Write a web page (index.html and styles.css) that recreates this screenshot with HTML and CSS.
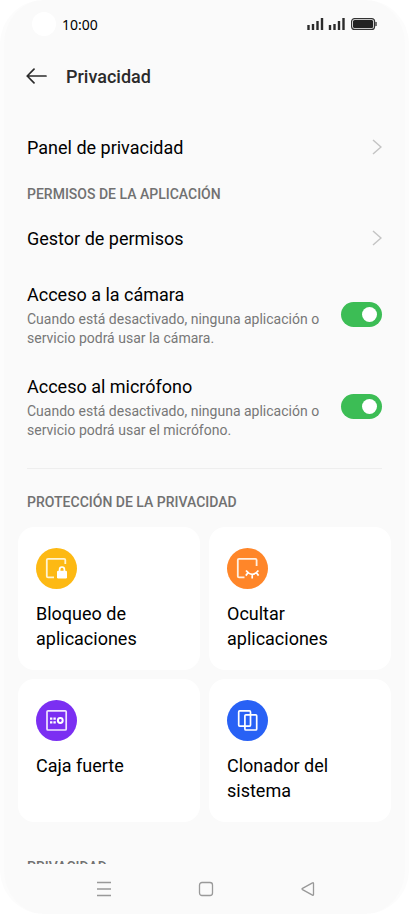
FILE: index.html
```html
<!DOCTYPE html>
<html lang="es">
<head>
<meta charset="utf-8">
<meta name="viewport" content="width=device-width, initial-scale=1">
<title>Privacidad</title>
<link rel="stylesheet" href="styles.css">
</head>
<body>
<div class="phone">
  <div class="status">
    <span class="camera"></span>
    <span class="clock">10:00</span>
    <svg class="indicators" width="70" height="14" viewBox="0 0 70 14" aria-hidden="true">
      <g stroke="#2b2b2b" stroke-width="2.4">
        <path d="M1.5 8v5M6 7v6M10.500 4v9M15 1v12"/>
        <path d="M23 8v5M27.500 7v6M32 4v9M36.500 1v12"/>
      </g>
      <rect x="44.600" y="1.600" width="23" height="10.800" rx="3" fill="#fafafa" stroke="#333" stroke-width="1.200"/>
      <rect x="46" y="3" width="20.200" height="8" rx="1.600" fill="#222"/>
      <path d="M69 5v4" stroke="#555" stroke-width="1.600"/>
    </svg>
  </div>
  <header class="header">
    <button class="back" type="button" aria-label="Atrás">
      <svg width="21" height="16" viewBox="0 0 21 16" fill="none" stroke="#2b2b2b" stroke-width="1.700" stroke-linecap="round" stroke-linejoin="round"><path d="M20 8H1.200M8 1.200L1.200 8L8 14.800"/></svg>
    </button>
    <h1>Privacidad</h1>
  </header>
  <main class="content">
    <a class="row" href="#panel">Panel de privacidad
      <svg class="chevron" width="10" height="16" viewBox="0 0 10 16"><path d="M1 1l8 7-8 7"/></svg>
    </a>
    <h2>PERMISOS DE LA APLICACIÓN</h2>
    <a class="row" href="#gestor">Gestor de permisos
      <svg class="chevron" width="10" height="16" viewBox="0 0 10 16"><path d="M1 1l8 7-8 7"/></svg>
    </a>
    <div class="switches">
      <label class="setting">
        <span class="text"><span class="title">Acceso a la cámara</span>
        <span class="note">Cuando está desactivado, ninguna aplicación o servicio podrá usar la cámara.</span></span>
        <input class="switch" type="checkbox" role="switch" checked>
      </label>
      <label class="setting">
        <span class="text"><span class="title">Acceso al micrófono</span>
        <span class="note">Cuando está desactivado, ninguna aplicación o servicio podrá usar el micrófono.</span></span>
        <input class="switch" type="checkbox" role="switch" checked>
      </label>
    </div>
    <hr>
    <h2>PROTECCIÓN DE LA PRIVACIDAD</h2>
    <div class="cards">
      <a class="card" href="#bloqueo">
        <svg class="badge" viewBox="0 0 41 41" fill="none" stroke="#fff" stroke-width="1.500">
          <circle class="amber" cx="20.500" cy="20.500" r="20.500"/>
          <path stroke="#fff4d2" stroke-width="1.800" d="M29.300 16V12q0-1.200-1.200-1.200H12q-1.200 0-1.200 1.200v16.200q0 1.200 1.200 1.200h6"/>
          <rect x="21" y="22.800" width="10" height="7.600" rx="1.200" fill="#fff" stroke="none"/>
          <path d="M23.600 23v-1.600a2.400 2.400 0 0 1 4.800 0V23" stroke-width="1.700"/>
        </svg>
        Bloqueo de aplicaciones
      </a>
      <a class="card" href="#ocultar">
        <svg class="badge" viewBox="0 0 41 41" fill="none" stroke="#fff" stroke-width="1.700">
          <circle class="orange" cx="20.500" cy="20.500" r="20.500"/>
          <path stroke="#fff0e2" stroke-width="1.800" d="M29.600 18V12q0-1.200-1.200-1.200H12q-1.200 0-1.200 1.200v16.200q0 1.200 1.200 1.200h5.500"/>
          <path d="M19 22.500q6.200 7.600 12.400 0M21 24.800l-2.200 2.800M29.400 24.800l2.200 2.800M25.200 26.200v4.200"/>
        </svg>
        Ocultar aplicaciones
      </a>
      <a class="card" href="#caja">
        <svg class="badge" viewBox="0 0 41 41" fill="none" stroke="#fff" stroke-width="1.700">
          <circle class="violet" cx="20.500" cy="20.500" r="20.500"/>
          <rect x="11" y="10.800" width="19.200" height="19.200" rx="1" stroke="#f1e5ff"/>
          <path d="M14 18.700h6M14 22.300h6" stroke-width="2.200" stroke-dasharray="2.400 1"/>
          <circle cx="24.300" cy="20.500" r="2.400" stroke-width="2"/>
        </svg>
        Caja fuerte
      </a>
      <a class="card" href="#clonador">
        <svg class="badge" viewBox="0 0 41 41" fill="none" stroke="#fff" stroke-width="1.700">
          <circle class="blue" cx="20.500" cy="20.500" r="20.500"/>
          <rect x="11.700" y="10.900" width="11.800" height="15.200" rx="1"/>
          <rect x="17.900" y="14.800" width="11.800" height="15.200" rx="1"/>
        </svg>
        Clonador del sistema
      </a>
    </div>
    <h2 class="next">PRIVACIDAD</h2>
  </main>
  <nav class="navbar">
    <button type="button" aria-label="Recientes"><svg width="16" height="16" viewBox="0 0 16 16"><path d="M1 1.500h14M1 8h14M1 14.500h14"/></svg></button>
    <button type="button" aria-label="Inicio"><svg width="16" height="16" viewBox="0 0 16 16"><rect x="1.500" y="1.500" width="13" height="13" rx="2.500"/></svg></button>
    <button type="button" aria-label="Volver"><svg width="16" height="16" viewBox="0 0 16 16"><path d="M13.500 2.500v11q0 1.200-1 .6L2.500 8.600q-1-.6 0-1.200L12.500 1.900q1-.6 1 .6z"/></svg></button>
  </nav>
</div>
</body>
</html>
```
FILE: styles.css
```css
* { box-sizing: border-box; }

body {
  margin: 0;
  background: #fff;
  font-family: Roboto, sans-serif;
  color: #000;
}

.phone {
  display: flex;
  flex-direction: column;
  height: 100vh;
  background: #fafafa;
  border: solid #fcfcfc;
  border-width: 0 4px;
  border-radius: 44px;
  overflow: hidden;
}

.status {
  display: flex;
  align-items: center;
  height: 48px;
  padding: 0 28px;
}

.camera {
  width: 24px;
  height: 24px;
  border-radius: 50%;
  background: #fff;
}

.clock {
  margin-left: 6px;
  font-family: "Noto Sans", sans-serif;
  font-size: 14px;
  font-weight: 400;
}

.indicators { margin-left: auto; }

.header {
  display: flex;
  align-items: center;
  gap: 19px;
  height: 56px;
  padding: 0 22px;
}

button {
  display: flex;
  padding: 0;
  border: 0;
  background: none;
}

h1 {
  margin: 0;
  font-size: 18px;
  font-weight: 500;
  color: #2b2b2b;
}

.content {
  flex: 1;
  min-height: 0;
  overflow: hidden;
  padding: 16px 14px 0;
}

a {
  color: inherit;
  text-decoration: none;
}

.row {
  display: flex;
  align-items: center;
  justify-content: space-between;
  height: 54px;
  padding: 0 9px;
  font-size: 18px;
}

.chevron {
  fill: none;
  stroke: #c4c4c4;
  stroke-width: 1.5;
}

h2 {
  margin: 0;
  padding: 3px 9px 0;
  font-size: 14px;
  line-height: 34px;
  font-weight: 500;
  color: #717171;
}

.switches { padding: 4px 9px 0; }

.setting {
  display: flex;
  align-items: center;
  gap: 20px;
  padding: 13px 0;
}

.text { flex: 1; }

.title {
  display: block;
  margin-bottom: 3px;
  font-size: 18px;
  line-height: 25px;
}

.note {
  display: block;
  font-size: 14px;
  line-height: 19px;
  color: #777;
}

.switch {
  appearance: none;
  display: flex;
  align-items: center;
  justify-content: flex-end;
  width: 41px;
  height: 25px;
  margin: 0 0 2px;
  padding: 0 5px;
  border-radius: 13px;
  background: #3cbd55;
}

.switch::before {
  content: "";
  width: 15px;
  height: 15px;
  border-radius: 50%;
  background: #fff;
}

.switch:not(:checked) {
  justify-content: flex-start;
  background: #ccc;
}

hr {
  height: 1px;
  margin: 15px 9px 13px;
  border: 0;
  background: #eee;
}

.cards {
  display: grid;
  grid-template-columns: 1fr 1fr;
  gap: 9px;
  margin-top: 8px;
}

.card {
  min-height: 143px;
  padding: 21px 18px 19px;
  border-radius: 16px;
  background: #fff;
  font-size: 18px;
  line-height: 25px;
}

.badge {
  display: block;
  width: 41px;
  height: 41px;
  margin-bottom: 12px;
}

.badge circle.amber { fill: #fdb913; stroke: none; }
.badge circle.orange { fill: #ff8629; stroke: none; }
.badge circle.violet { fill: #7b2ff2; stroke: none; }
.badge circle.blue { fill: #2861f5; stroke: none; }

.next { margin-top: 25px; }

.navbar {
  display: flex;
  align-items: center;
  justify-content: center;
  gap: 86px;
  height: 50px;
  padding-left: 3px;
}

.navbar svg {
  fill: none;
  stroke: #999;
  stroke-width: 1.3;
}
```
